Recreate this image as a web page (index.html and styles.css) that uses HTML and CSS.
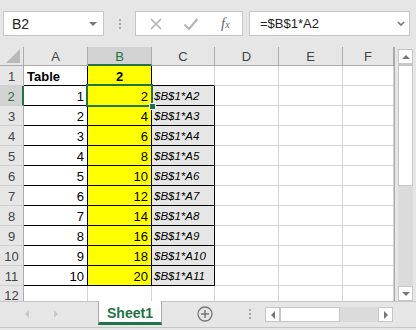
FILE: index.html
```html
<!DOCTYPE html>
<html lang="en">
<head>
    <meta charset="UTF-8">
    <title>Sheet1</title>
    <link rel="stylesheet" href="styles.css">
</head>
<body>
    <!-- Formula bar -->
    <div class="formula-bar">
        <div class="name-box">
            <span>B2</span>
            <span class="drop"></span>
        </div>
        <div class="grip"><i></i><i></i><i></i></div>
        <div class="fx-buttons">
            <svg class="btn-icon" width="14" height="14" viewBox="0 0 14 14"><path d="M2 2 L12 12 M12 2 L2 12" stroke="#b4b4b4" stroke-width="1.6" fill="none"/></svg>
            <svg class="btn-icon" width="16" height="14" viewBox="0 0 16 14"><path d="M1.5 7.5 L6 12 L14.5 2" stroke="#b4b4b4" stroke-width="2.2" fill="none"/></svg>
            <span class="fx">f<small>x</small></span>
        </div>
        <div class="formula-input">
            <span>=$B$1*A2</span>
            <svg width="8" height="6" viewBox="0 0 8 6"><path d="M1 1 L4 4 L7 1" stroke="#777" stroke-width="1.6" fill="none"/></svg>
        </div>
    </div>

    <!-- Sheet -->
    <div class="sheet-area">
        <div class="grid">
            <div class="hdr corner"><span class="tri"></span></div>
            <div class="hdr col">A</div>
            <div class="hdr col sel-col">B</div>
            <div class="hdr col">C</div>
            <div class="hdr col">D</div>
            <div class="hdr col">E</div>
            <div class="hdr col">F</div>

            <div class="hdr row">1</div>
            <div class="cell bb br bold">Table</div>
            <div class="cell bb br yellow bold center">2</div>
            <div class="cell bb"></div>
            <div class="cell"></div><div class="cell"></div><div class="cell"></div>

            <div class="hdr row sel-row">2</div>
            <div class="cell bb br num">1</div>
            <div class="cell bb br yellow num active">2<span class="sel"><span class="handle"></span></span></div>
            <div class="cell bb br formula">$B$1*A2</div>
            <div class="cell"></div><div class="cell"></div><div class="cell"></div>

            <div class="hdr row">3</div>
            <div class="cell bb br num">2</div>
            <div class="cell bb br yellow num">4</div>
            <div class="cell bb br formula">$B$1*A3</div>
            <div class="cell"></div><div class="cell"></div><div class="cell"></div>

            <div class="hdr row">4</div>
            <div class="cell bb br num">3</div>
            <div class="cell bb br yellow num">6</div>
            <div class="cell bb br formula">$B$1*A4</div>
            <div class="cell"></div><div class="cell"></div><div class="cell"></div>

            <div class="hdr row">5</div>
            <div class="cell bb br num">4</div>
            <div class="cell bb br yellow num">8</div>
            <div class="cell bb br formula">$B$1*A5</div>
            <div class="cell"></div><div class="cell"></div><div class="cell"></div>

            <div class="hdr row">6</div>
            <div class="cell bb br num">5</div>
            <div class="cell bb br yellow num">10</div>
            <div class="cell bb br formula">$B$1*A6</div>
            <div class="cell"></div><div class="cell"></div><div class="cell"></div>

            <div class="hdr row">7</div>
            <div class="cell bb br num">6</div>
            <div class="cell bb br yellow num">12</div>
            <div class="cell bb br formula">$B$1*A7</div>
            <div class="cell"></div><div class="cell"></div><div class="cell"></div>

            <div class="hdr row">8</div>
            <div class="cell bb br num">7</div>
            <div class="cell bb br yellow num">14</div>
            <div class="cell bb br formula">$B$1*A8</div>
            <div class="cell"></div><div class="cell"></div><div class="cell"></div>

            <div class="hdr row">9</div>
            <div class="cell bb br num">8</div>
            <div class="cell bb br yellow num">16</div>
            <div class="cell bb br formula">$B$1*A9</div>
            <div class="cell"></div><div class="cell"></div><div class="cell"></div>

            <div class="hdr row">10</div>
            <div class="cell bb br num">9</div>
            <div class="cell bb br yellow num">18</div>
            <div class="cell bb br formula">$B$1*A10</div>
            <div class="cell"></div><div class="cell"></div><div class="cell"></div>

            <div class="hdr row">11</div>
            <div class="cell bb br num">10</div>
            <div class="cell bb br yellow num">20</div>
            <div class="cell bb br formula">$B$1*A11</div>
            <div class="cell"></div><div class="cell"></div><div class="cell"></div>

            <div class="hdr row last">12</div>
            <div class="cell last"></div><div class="cell last"></div><div class="cell last"></div>
            <div class="cell last"></div><div class="cell last"></div><div class="cell last"></div>
        </div>

        <div class="vscroll">
            <div class="sb-btn"><span class="arrow up"></span></div>
            <div class="v-thumb"></div>
            <div class="v-track"></div>
            <div class="sb-btn"><span class="arrow down"></span></div>
        </div>
    </div>

    <!-- Sheet tabs -->
    <div class="tab-bar">
        <div class="nav">
            <span class="arrow left light"></span>
            <span class="arrow right light"></span>
        </div>
        <div class="tab">Sheet1</div>
        <div class="add">
            <svg width="16" height="16" viewBox="0 0 16 16"><circle cx="8" cy="8" r="7" stroke="#777" stroke-width="1.3" fill="none"/><path d="M8 4 V12 M4 8 H12" stroke="#777" stroke-width="1.5"/></svg>
        </div>
        <div class="grip tab-grip"><i></i><i></i><i></i></div>
        <div class="hscroll">
            <div class="sb-btn h"><span class="arrow left"></span></div>
            <div class="h-thumb"></div>
            <div class="h-track"></div>
            <div class="sb-btn h"><span class="arrow right"></span></div>
        </div>
    </div>
</body>
</html>
```

FILE: styles.css
```css
body {
    margin: 0;
    width: 416px;
    height: 330px;
    overflow: hidden;
    background-color: #e6e6e6;
    font-family: "Liberation Sans", Arial, sans-serif;
    color: #000;
}

/* formula bar */
.formula-bar {
    height: 47px;
    box-sizing: border-box;
    padding-top: 11px;
    display: flex;
    align-items: flex-start;
}
.name-box {
    margin-left: 3px;
    width: 101px;
    height: 25px;
    box-sizing: border-box;
    background-color: #fff;
    border: 1px solid #c6c6c6;
    display: flex;
    align-items: center;
    justify-content: space-between;
    padding: 0 6px 0 8px;
    font-size: 14px;
    color: #222;
}
.drop {
    width: 0;
    height: 0;
    border-left: 4px solid transparent;
    border-right: 4px solid transparent;
    border-top: 4px solid #777;
}
.grip {
    width: 31px;
    height: 25px;
    display: flex;
    flex-direction: column;
    align-items: center;
    justify-content: center;
    gap: 2px;
}
.grip i {
    width: 2px;
    height: 2px;
    background-color: #a6a6a6;
}
.fx-buttons {
    width: 108px;
    height: 25px;
    box-sizing: border-box;
    background-color: #fff;
    border: 1px solid #c6c6c6;
    display: flex;
    align-items: center;
    padding-left: 13px;
    gap: 20px;
}
.fx {
    font-family: "Liberation Serif", serif;
    font-style: italic;
    font-size: 15px;
    color: #666;
    margin-left: 2px;
}
.fx small {
    font-size: 10px;
}
.formula-input {
    margin-left: 6px;
    width: 161px;
    height: 25px;
    box-sizing: border-box;
    background-color: #fff;
    border: 1px solid #c6c6c6;
    display: flex;
    align-items: center;
    justify-content: space-between;
    padding: 0 4px 0 10px;
    font-size: 13px;
    color: #222;
}

/* sheet grid */
.sheet-area {
    display: flex;
    height: 254px;
}
.grid {
    display: grid;
    grid-template-columns: 24px 64px 64px 63px 64px 64px 51px;
    grid-template-rows: 19px repeat(11, 20px) 15px;
    width: 394px;
    background-color: #fff;
    border-right: 1px solid #ababab;
    font-size: 13px;
}
.hdr {
    background-color: #e6e6e6;
    color: #444;
    display: flex;
    align-items: center;
    justify-content: center;
    box-sizing: border-box;
}
.hdr.col {
    border-right: 1px solid #ababab;
    border-bottom: 1px solid #ababab;
    padding-top: 1px;
}
.hdr.row {
    border-right: 1px solid #ababab;
    border-bottom: 1px solid #d0d0d0;
    padding-top: 2px;
}
.hdr.last {
    border-bottom: none;
    align-items: flex-start;
}
.corner {
    border-right: 1px solid #ababab;
    border-bottom: 1px solid #ababab;
    align-items: flex-end;
    justify-content: flex-end;
    padding: 0 3px 2px 0;
}
.tri {
    width: 0;
    height: 0;
    border-left: 14px solid transparent;
    border-bottom: 14px solid #b9b9b9;
}
.sel-col {
    background-color: #d2d2d2;
    color: #217346;
    border-bottom: 2px solid #217346 !important;
}
.sel-row {
    background-color: #d2d2d2;
    color: #217346;
    border-right: 2px solid #217346 !important;
}
.cell {
    box-sizing: border-box;
    border-right: 1px solid #d4d4d4;
    border-bottom: 1px solid #d4d4d4;
    padding: 0 3px;
    line-height: 21px;
    white-space: nowrap;
    overflow: visible;
}
.cell.last {
    border-bottom: none;
}
.cell.bb {
    border-bottom-color: #000;
}
.cell.br {
    border-right-color: #000;
}
.bold {
    font-weight: bold;
}
.center {
    text-align: center;
}
.num {
    text-align: right;
}
.yellow {
    background-color: #ffff00;
}
.formula {
    background-color: #e7e6e6;
    font-style: italic;
    font-size: 11.5px;
    padding-left: 2px;
    overflow: hidden;
}
.active {
    position: relative;
}
.sel {
    position: absolute;
    left: -2px;
    top: -2px;
    right: -2px;
    bottom: -2px;
    border: 2px solid #217346;
}
.handle {
    position: absolute;
    right: -5px;
    bottom: -5px;
    width: 5px;
    height: 5px;
    background-color: #217346;
    border: 1px solid #fff;
}

/* scrollbars */
.vscroll {
    margin-left: 3px;
    width: 15px;
    display: flex;
    flex-direction: column;
    padding-top: 2px;
}
.sb-btn {
    width: 15px;
    height: 15px;
    box-sizing: border-box;
    background-color: #fff;
    border: 1px solid #c6c6c6;
    display: flex;
    align-items: center;
    justify-content: center;
}
.v-thumb {
    height: 122px;
    box-sizing: border-box;
    background-color: #fff;
    border: 1px solid #c6c6c6;
    border-top: 2px solid #c6c6c6;
}
.v-track {
    flex: 1;
    background-color: #dbdbdb;
}
.arrow {
    width: 0;
    height: 0;
}
.arrow.up {
    border-left: 4px solid transparent;
    border-right: 4px solid transparent;
    border-bottom: 4px solid #777;
}
.arrow.down {
    border-left: 4px solid transparent;
    border-right: 4px solid transparent;
    border-top: 4px solid #777;
}
.arrow.left {
    border-top: 4px solid transparent;
    border-bottom: 4px solid transparent;
    border-right: 4px solid #777;
}
.arrow.right {
    border-top: 4px solid transparent;
    border-bottom: 4px solid transparent;
    border-left: 4px solid #777;
}
.arrow.light {
    border-left-color: transparent;
    border-right-color: transparent;
}
.arrow.left.light {
    border-right-color: #c8c8c8;
}
.arrow.right.light {
    border-left-color: #c8c8c8;
}

/* sheet tabs */
.tab-bar {
    height: 27px;
    box-sizing: border-box;
    border-top: 1px solid #c6c6c6;
    border-bottom: 1px solid #c6c6c6;
    display: flex;
    align-items: flex-start;
}
.nav {
    width: 98px;
    height: 24px;
    display: flex;
    align-items: center;
    padding-left: 25px;
    gap: 25px;
    box-sizing: border-box;
}
.tab {
    width: 64px;
    height: 24px;
    margin-top: -1px;
    box-sizing: border-box;
    background-color: #fff;
    border-left: 1px solid #ababab;
    border-right: 1px solid #ababab;
    border-bottom: 3px solid #217346;
    color: #217346;
    font-weight: bold;
    font-size: 14px;
    display: flex;
    align-items: center;
    justify-content: center;
    padding-top: 2px;
}
.add {
    margin-left: 35px;
    height: 24px;
    display: flex;
    align-items: center;
}
.tab-grip {
    margin-left: 33px;
    width: 8px;
    height: 24px;
    gap: 2px;
}
.hscroll {
    margin-left: 11px;
    margin-top: 5px;
    display: flex;
    width: 128px;
    height: 15px;
}
.sb-btn.h {
    width: 15px;
}
.h-thumb {
    width: 60px;
    box-sizing: border-box;
    background-color: #fff;
    border: 1px solid #c6c6c6;
}
.h-track {
    flex: 1;
    background-color: #dbdbdb;
}
```
